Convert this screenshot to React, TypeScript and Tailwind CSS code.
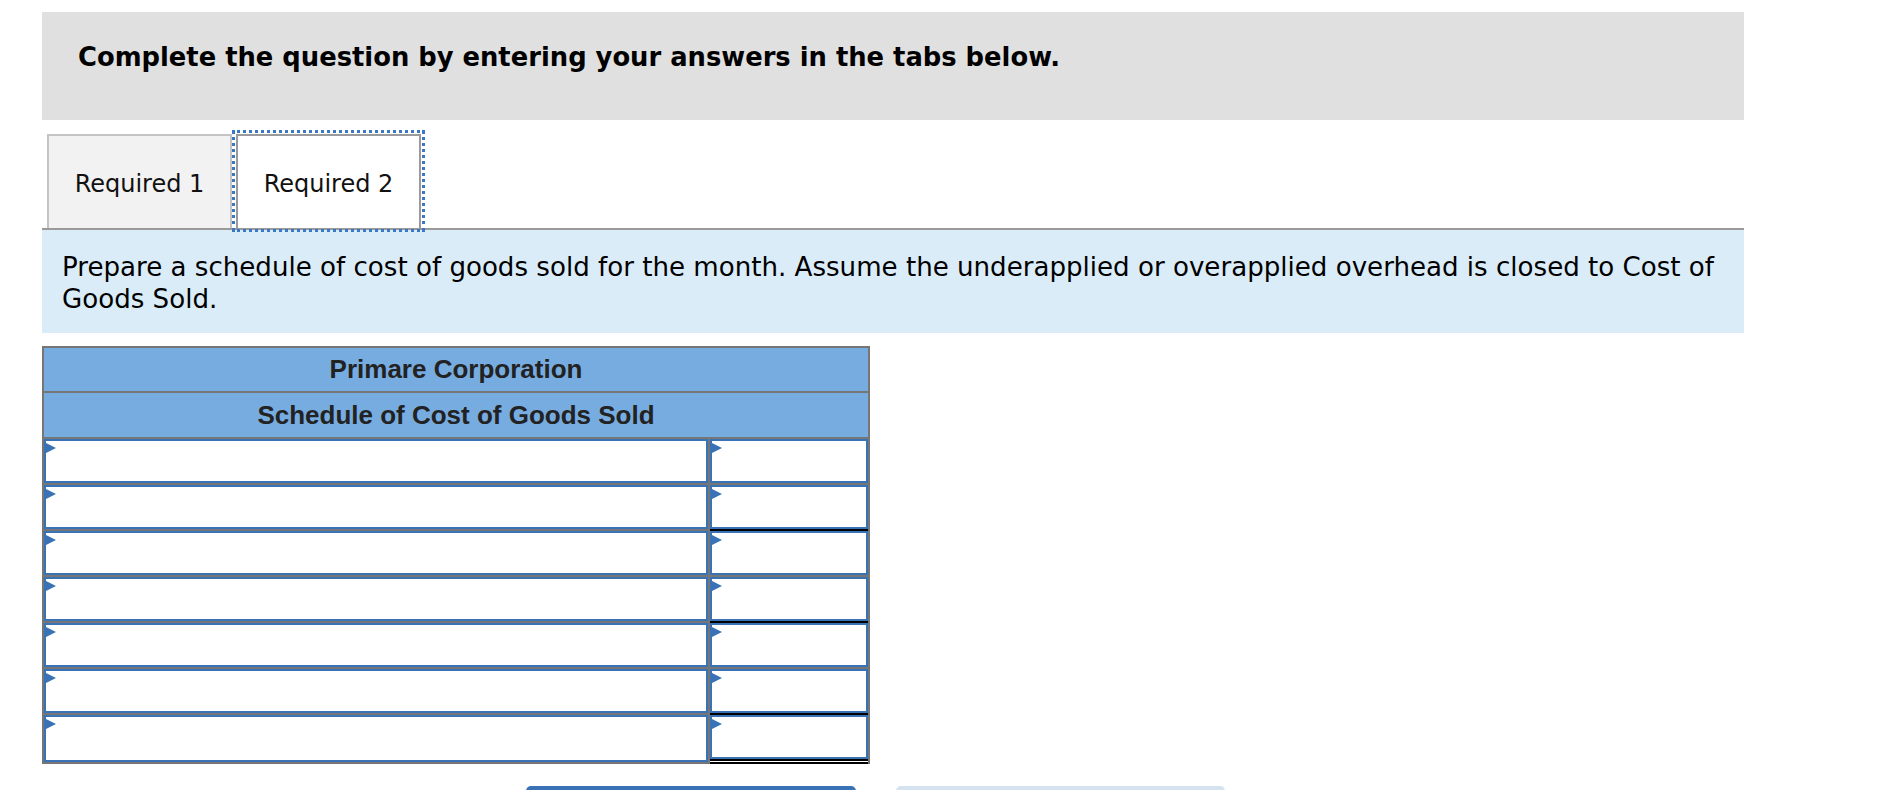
import React from "react";

const rows = [
	{ rule: "none" },
	{ rule: "single" },
	{ rule: "none" },
	{ rule: "single" },
	{ rule: "none" },
	{ rule: "single" },
	{ rule: "double" },
];

function InputBox({ className = "" }: { className?: string }) {
	return (
		<div className={`relative bg-white border-2 border-[#3973b6] ${className}`}>
			<span className="absolute -left-[2px] top-[1px] w-0 h-0 border-y-[6px] border-y-transparent border-l-[12px] border-l-[#3973b6]" />
		</div>
	);
}

export default function App() {
	return (
		<div className="min-h-screen bg-white pt-[12px] pl-[42px] font-['DejaVu_Sans',Verdana,sans-serif] text-black">
			<div className="w-[1702px]">
				<div className="h-[108px] bg-[#e0e0e0] pl-[36px] pt-[30px]">
					<h1 className="text-[25.8px] leading-[30px] font-bold">
						Complete the question by entering your answers in the tabs below.
					</h1>
				</div>

				<div className="mt-[14px] flex items-end border-b-2 border-[#9a9a9a]">
					<button className="ml-[5px] flex h-[94px] w-[185px] items-center justify-center border-2 border-b-0 border-[#c4c4c4] bg-[#f2f2f2] pt-[4px] text-[24px] text-[#111]">
						Required 1
					</button>
					<button className="ml-[4px] flex h-[94px] w-[185px] items-center justify-center border-2 border-b-0 border-[#9a9a9a] bg-white pt-[4px] text-[24px] text-[#111] outline-[3px] outline-dotted outline-offset-1 outline-[#3b78c4]">
						Required 2
					</button>
				</div>

				<div className="h-[103px] bg-[#dbecf9] pl-[20px] pr-[20px] pt-[21px]">
					<p className="text-[26.1px] leading-[32px]">
						Prepare a schedule of cost of goods sold for the month. Assume the underapplied or overapplied overhead is closed to Cost of Goods Sold.
					</p>
				</div>

				<div className="mt-[13px] w-[828px] border-x-2 border-t-2 border-[#767676] bg-[#767676] font-['Liberation_Sans',Arial,sans-serif]">
					<div className="flex h-[43px] items-center justify-center bg-[#77ace1] text-[26px] font-bold text-[#222]">
						Primare Corporation
					</div>
					<div className="mt-[2px] flex h-[44px] items-center justify-center bg-[#77ace1] text-[26px] font-bold text-[#222]">
						Schedule of Cost of Goods Sold
					</div>
					<div className="mt-[2px] flex flex-col">
						{rows.map((r, i) => (
							<div key={i} className="flex gap-[2px]">
								<div className="flex w-[664px] flex-col">
									<InputBox className={r.rule === "double" ? "h-[47px]" : "h-[44px]"} />
									<div className="h-[2px]" />
								</div>
								<div className="flex flex-1 flex-col">
									<InputBox className="h-[44px]" />
									{r.rule === "double" ? (
										<div className="flex h-[5px] flex-col bg-white">
											<div className="h-[2px] bg-black" />
											<div className="h-[1px] bg-white" />
											<div className="h-[2px] bg-black" />
										</div>
									) : (
										<div className={r.rule === "single" ? "h-[2px] bg-black" : "h-[2px]"} />
									)}
								</div>
							</div>
						))}
					</div>
				</div>

				<div className="mt-[22px] flex gap-[40px] pl-[484px] pb-[20px]">
					<button aria-label="Previous" className="h-[44px] w-[330px] rounded-[5px] bg-[#3973b6]" />
					<button aria-label="Next" className="h-[44px] w-[329px] rounded-[5px] bg-[#d5e3f1]" />
				</div>
			</div>
		</div>
	);
}
